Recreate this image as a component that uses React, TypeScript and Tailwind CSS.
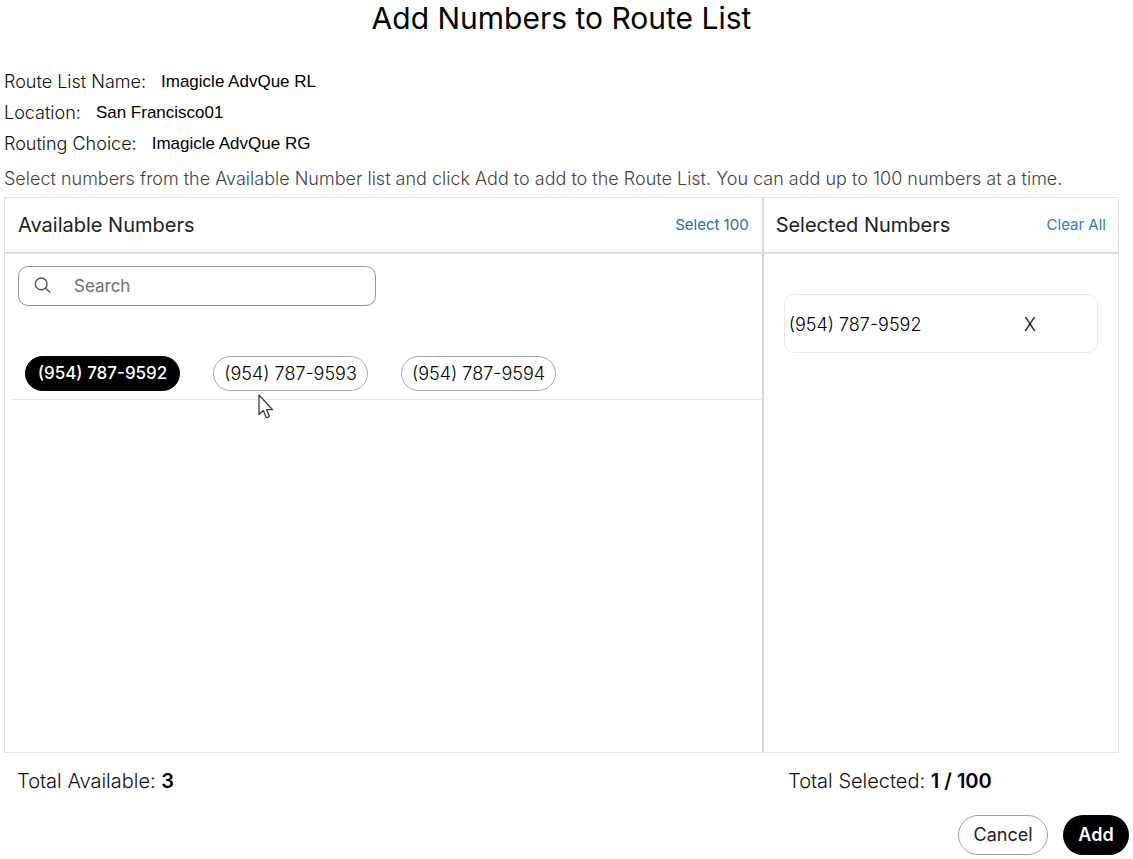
import { useState } from "react";

const details = [
  { label: "Route List Name:", value: "Imagicle AdvQue RL" },
  { label: "Location:", value: "San Francisco01" },
  { label: "Routing Choice:", value: "Imagicle AdvQue RG" },
];

const available = ["(954) 787-9592", "(954) 787-9593", "(954) 787-9594"];

function SearchIcon() {
  return (
    <svg viewBox="0 0 18 18" className="size-[18px] shrink-0 text-[#5a5a5a]" fill="none" stroke="currentColor" strokeWidth="1.4" strokeLinecap="round" aria-hidden="true">
      <circle cx="7.2" cy="6.9" r="5.9" />
      <path d="M11.5 11.2 15.8 15.2" />
    </svg>
  );
}

function Pointer() {
  return (
    <svg viewBox="0 0 16 25" className="pointer-events-none absolute top-[38px] left-[45px] h-[25px] w-4" fill="#fff" stroke="#3c3c46" strokeWidth="1.3" strokeLinejoin="round" aria-hidden="true">
      <path d="M1 1V20.6L5.3 16.6 8.2 23.2Q9.6 24.4 11.3 22L8.6 15.7H14.6Z" />
    </svg>
  );
}

export default function App() {
  const [selected, setSelected] = useState<string[]>([available[0]]);
  const [query, setQuery] = useState("");

  const toggle = (n: string) =>
    setSelected((s) => (s.includes(n) ? s.filter((v) => v !== n) : [...s, n]));

  return (
    <main className="bg-white px-1 pb-1 font-['Inter',sans-serif] text-[#333]">
      <div className="pr-[10px]">
        <h1 className="text-center text-3xl leading-9 text-black">Add Numbers to Route List</h1>

        <dl className="mt-[30px]">
          {details.map((d) => (
            <div key={d.label} className="flex h-[31px] items-center gap-[15px]">
              <dt className="text-lg leading-6 font-light text-[#111]">{d.label}</dt>
              <dd className="font-['Liberation_Sans',sans-serif] text-[17px] leading-6 text-black">{d.value}</dd>
            </div>
          ))}
        </dl>

        <p className="pt-2 pb-1.5 text-lg leading-6 font-light text-[#444]">
          Select numbers from the Available Number list and click Add to add to the Route List. You can add up to 100 numbers at a time.
        </p>

        <div className="grid min-h-[556px] grid-cols-[758fr_357fr] border border-[#e0e2e0]">
          <section>
            <header className="flex h-14 items-center justify-between border-b-2 border-[#dcdedc] bg-[#fdfdfd] px-[13px]">
              <h2 className="text-xl text-[#222]">Available Numbers</h2>
              <button type="button" onClick={() => setSelected(available)} className="text-[15px] text-[#2a6cae]">Select 100</button>
            </header>
            <div className="pt-3 pl-[7px]">
              <label className="ml-1.5 flex h-10 w-[358px] items-center gap-[22px] rounded-[10px] border border-[#929492] px-[15px]">
                <SearchIcon />
                <input
                  type="text"
                  aria-label="Search numbers"
                  placeholder="Search"
                  value={query}
                  onChange={(e) => setQuery(e.target.value)}
                  className="min-w-0 flex-1 bg-transparent pt-0.5 text-[17px] outline-none placeholder:text-[#6f6f6f]"
                />
              </label>
              <ul className="mt-[50px] flex flex-wrap gap-[33px] border-b border-[#e6e6e6] pb-2 pl-[13px]">
                {available
                  .filter((n) => n.includes(query))
                  .map((n, i) => (
                    <li key={n} className="relative">
                      <button
                        type="button"
                        aria-pressed={selected.includes(n)}
                        onClick={() => toggle(n)}
                        className={
                          selected.includes(n)
                            ? "h-[35px] w-[155px] rounded-full border border-black bg-black text-[17px] font-medium text-white"
                            : "h-[35px] w-[155px] rounded-full border border-[#a8a8a8] bg-white text-lg font-light text-black"
                        }
                      >
                        {n}
                      </button>
                      {i === 1 && <Pointer />}
                    </li>
                  ))}
              </ul>
            </div>
          </section>

          <section className="border-l-2 border-[#d8d8d8]">
            <header className="flex h-14 items-center justify-between border-b-2 border-[#dcdedc] bg-[#fdfdfd] px-3">
              <h2 className="text-xl text-[#222]">Selected Numbers</h2>
              <button type="button" onClick={() => setSelected([])} className="text-[15px] text-[#3079c8]">Clear All</button>
            </header>
            <ul className="flex flex-col gap-3 px-5 pt-10">
              {selected.map((n) => (
                <li key={n} className="flex h-[59px] items-center justify-between rounded-[10px] border border-[#e9eae9] pt-0.5 pr-[61px] pl-1 text-lg font-light text-black">
                  <span>{n}</span>
                  <button type="button" aria-label={`Remove ${n}`} onClick={() => toggle(n)}>X</button>
                </li>
              ))}
            </ul>
          </section>
        </div>

        <div className="grid grid-cols-[758fr_357fr] pt-3.5 text-xl leading-7 font-light text-[#111]">
          <p className="pl-[13px]">
            Total Available: <strong className="font-semibold text-black">{available.length}</strong>
          </p>
          <p className="pl-[26px]">
            Total Selected: <strong className="font-semibold text-black">{selected.length} / 100</strong>
          </p>
        </div>
      </div>

      <div className="mt-5 flex justify-end gap-[15px]">
        <button type="button" onClick={() => setSelected([])} className="h-10 w-[90px] rounded-full border border-[#a0a0a0] text-lg text-[#222]">Cancel</button>
        <button type="button" className="h-10 w-[66px] rounded-full bg-black text-lg font-semibold text-white">Add</button>
      </div>
    </main>
  );
}
